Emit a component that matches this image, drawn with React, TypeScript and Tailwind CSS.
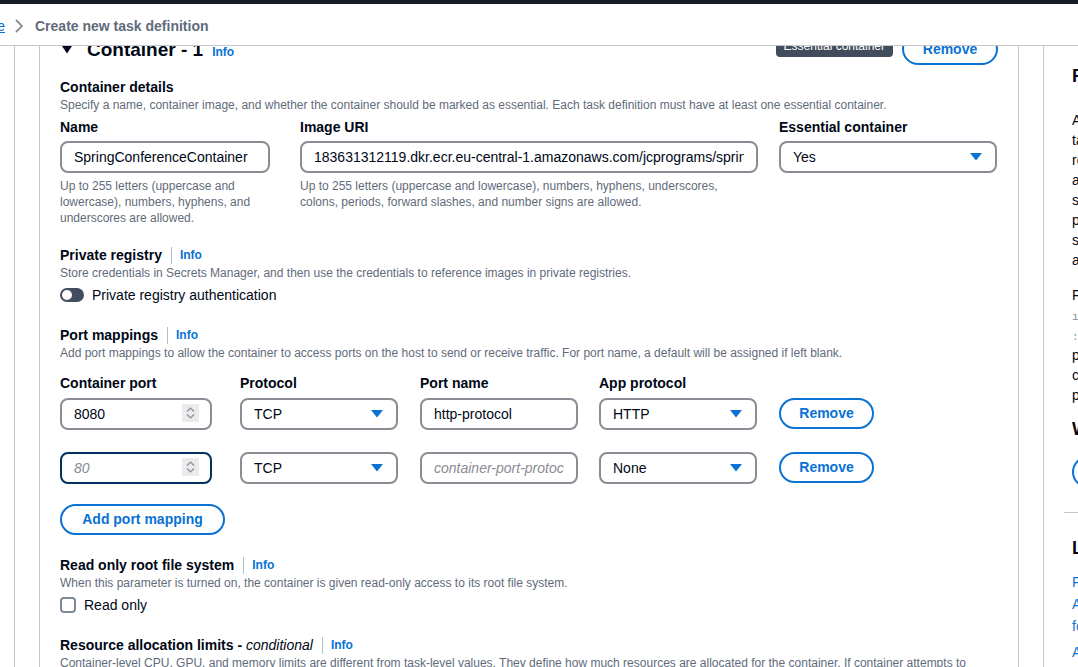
import { ReactNode } from "react";

const Info = () => <span className="text-[12px] font-bold text-[#0972d3]">Info</span>;

type TitleProps = { children: ReactNode; desc: string; className?: string; info?: boolean };

const SectionTitle = ({ children, desc, className = "", info = true }: TitleProps) => (
  <div className={className}>
    <div className="flex h-[18px] items-center">
      <span className="whitespace-nowrap text-[14px] font-bold leading-[18px]">{children}</span>
      {info && (
        <>
          <span className="ml-[9px] mr-[8px] h-[17px] w-px bg-[#b6bec9]" />
          <Info />
        </>
      )}
    </div>
    <p className="mt-[1px] text-[12px] leading-[16px] text-[#5f6b7a]">{desc}</p>
  </div>
);

const Label = ({ children }: { children: ReactNode }) => (
  <div className="text-[14px] font-bold leading-[18px]">{children}</div>
);

const Caret = () => (
  <svg width="12" height="8" viewBox="0 0 12 8" className="shrink-0">
    <polygon points="0,0 12,0 6,7.5" fill="#0972d3" />
  </svg>
);

const Select = ({ value, width }: { value: string; width: string }) => (
  <div
    className={`flex h-[32px] items-center justify-between rounded-[8px] border-2 border-[#8c8c94] pl-[12px] pr-[13px] text-[14px] ${width}`}
  >
    <span>{value}</span>
    <Caret />
  </div>
);

const NumberInput = ({ value, placeholder, focused }: { value?: string; placeholder?: string; focused?: boolean }) => (
  <div className="relative w-[152px]">
    <input
      readOnly
      value={value ?? ""}
      placeholder={placeholder}
      className={`h-[32px] w-full rounded-[8px] border-2 px-[12px] text-[14px] text-[#000716] outline-none placeholder:italic placeholder:text-[#8c8c94] ${
        focused ? "border-[#033160]" : "border-[#8c8c94]"
      }`}
    />
    <div className="absolute right-[13px] top-[6px] flex h-[18px] w-[17px] flex-col items-center justify-center gap-[2px] bg-[#e9ebed]">
      <svg width="9" height="5" viewBox="0 0 9 5">
        <path d="M1 4.5 L4.5 1 L8 4.5" fill="none" stroke="#8c8c94" strokeWidth="1.2" />
      </svg>
      <svg width="9" height="5" viewBox="0 0 9 5">
        <path d="M1 0.5 L4.5 4 L8 0.5" fill="none" stroke="#8c8c94" strokeWidth="1.2" />
      </svg>
    </div>
  </div>
);

const TextInput = ({ value, placeholder, width }: { value?: string; placeholder?: string; width: string }) => (
  <input
    readOnly
    value={value ?? ""}
    placeholder={placeholder}
    className={`h-[32px] rounded-[8px] border-2 border-[#8c8c94] px-[12px] text-[14px] text-[#000716] outline-none placeholder:italic placeholder:text-[#8c8c94] ${width}`}
  />
);

const OutlineButton = ({ children, width, height = "h-[31px]" }: { children: ReactNode; width: string; height?: string }) => (
  <button
    className={`flex items-center justify-center rounded-full border-2 border-[#0972d3] text-[14px] font-bold text-[#0972d3] ${width} ${height}`}
  >
    {children}
  </button>
);

const PortRow = ({ port, placeholderPort, name, placeholderName, app, focused, className = "" }: {
  port?: string;
  placeholderPort?: string;
  name?: string;
  placeholderName?: string;
  app: string;
  focused?: boolean;
  className?: string;
}) => (
  <div className={`flex gap-[20px] ${className}`}>
    <div className="w-[160px]">
      <NumberInput value={port} placeholder={placeholderPort} focused={focused} />
    </div>
    <div className="w-[160px]">
      <Select value="TCP" width="w-[158px]" />
    </div>
    <div className="w-[159px]">
      <TextInput value={name} placeholder={placeholderName} width="w-[158px]" />
    </div>
    <div className="w-[160px]">
      <Select value={app} width="w-[158px]" />
    </div>
    <OutlineButton width="w-[95px]">Remove</OutlineButton>
  </div>
);

const HelpPanel = () => (
  <aside className="w-[34px] overflow-hidden">
    <div className="w-[320px] whitespace-nowrap pl-[20px] text-[14px] leading-[20px]">
      <div className="pl-[8px]">
        <h3 className="mt-[19px] text-[18px] font-bold leading-[22px]">Fargate task definition</h3>
        <div className="mt-[23px]">
          <div className="h-[20px]">A task definition is required to run Docker</div>
          <div className="h-[20px]">tasks in Amazon ECS. It works as a</div>
          <div className="h-[20px]">recipe that tells ECS which containers to</div>
          <div className="h-[20px]">assemble, how much CPU and memory to</div>
          <div className="h-[20px]">set aside, and which launch type and</div>
          <div className="h-[20px]">ports the application needs. It also</div>
          <div className="h-[20px]">specifies the IAM role and logging</div>
          <div className="h-[20px]">and data volumes the tasks use.</div>
        </div>
        <div className="mt-[15px]">
          <div className="h-[20px]">For images in a private registry, use</div>
          <div className="h-[20px]">
            <code className="font-['Liberation_Mono',monospace] text-[11px] text-[#8c8c94]">ıepository-url</code> and
          </div>
          <div className="h-[20px]">
            <code className="font-['Liberation_Mono',monospace] text-[11px] text-[#8c8c94]">:image-tag</code> values.
          </div>
          <div className="h-[20px]">provide the credentials in Secrets</div>
          <div className="h-[20px]">credentials manager before you</div>
          <div className="h-[20px]">proceed with creating the task.</div>
        </div>
        <h3 className="mt-[13px] text-[18px] font-bold leading-[22px]">What's new</h3>
        <button className="mt-[16px] h-[32px] rounded-full border-2 border-[#0972d3] px-[20px] text-[14px] font-bold text-[#0972d3]">
          Learn about updates
        </button>
      </div>
      <div className="mt-[24px] h-px bg-[#c6c6cd]" />
      <div className="pl-[8px]">
        <h3 className="mt-[24px] text-[18px] font-bold leading-[22px]">Learn more</h3>
        <div className="mt-[12px] leading-[22px] text-[#0972d3]">
          <div>Fargate task definitions</div>
          <div>Amazon ECS task definition</div>
          <div>for Fargate launch type</div>
          <div className="mt-[4px]">Amazon ECS container</div>
          <div>settings</div>
        </div>
      </div>
    </div>
  </aside>
);

export default function App() {
  return (
    <div className="h-[667px] w-[1078px] overflow-hidden bg-white font-['Liberation_Sans',Arial,sans-serif] text-[#000716]">
      <div className="h-[4px] bg-[#161d26]" />

      {/* Breadcrumbs */}
      <div className="flex h-[42px] items-center border-b border-[#c6c6cd] pt-[3px]">
        <div className="flex w-[5px] justify-end overflow-hidden">
          <a className="whitespace-nowrap text-[14px] text-[#0972d3] underline">Amazon Elastic Container Service</a>
        </div>
        <svg width="8" height="14" viewBox="0 0 8 14" className="ml-[10px]">
          <path d="M1 1 L7 7 L1 13" fill="none" stroke="#8c8c94" strokeWidth="1.8" />
        </svg>
        <span className="ml-[12px] text-[14px] font-bold text-[#5f6b7a]">Create new task definition</span>
      </div>

      <div className="flex h-[621px]">
        <div className="w-[15px] border-r border-[#c6c6cd]" />
        <div className="w-[25px] border-r border-[#c6c6cd]" />

        {/* Container form */}
        <main className="flex w-[978px] flex-col overflow-hidden px-[20px]">
          <div className="mt-[-13px] flex h-[32px] shrink-0 items-start justify-between">
            <div className="flex items-start">
              <svg width="10" height="8" viewBox="0 0 10 8" className="ml-[2px] mt-[13px]">
                <polygon points="0,0 10,0 5,7.5" fill="#000716" />
              </svg>
              <div className="ml-[15px] mt-[5px] flex items-baseline">
                <h2 className="text-[19px] font-bold leading-[24px]">Container - 1</h2>
                <span className="ml-[9px]">
                  <Info />
                </span>
              </div>
            </div>
            <div className="flex items-start">
              <span className="mt-[3px] h-[21px] rounded-[4px] bg-[#414d5c] px-[8px] text-[12px] leading-[21px] text-white">
                Essential container
              </span>
              <OutlineButton width="w-[96px] ml-[9px]" height="h-[32px]">
                Remove
              </OutlineButton>
            </div>
          </div>

          <SectionTitle
            className="mt-[13px]"
            info={false}
            desc="Specify a name, container image, and whether the container should be marked as essential. Each task definition must have at least one essential container."
          >
            Container details
          </SectionTitle>

          <div className="mt-[5px] flex">
            <div className="w-[220px]">
              <Label>Name</Label>
              <TextInput value="SpringConferenceContainer" width="w-[210px] mt-[5px]" />
              <p className="mt-[5px] text-[12px] leading-[16px] text-[#5f6b7a]">
                Up to 255 letters (uppercase and
                <br />
                lowercase), numbers, hyphens, and
                <br />
                underscores are allowed.
              </p>
            </div>
            <div className="ml-[20px] w-[458px]">
              <Label>Image URI</Label>
              <TextInput
                value="183631312119.dkr.ecr.eu-central-1.amazonaws.com/jcprograms/springconference:latest"
                width="w-[458px] mt-[5px]"
              />
              <p className="mt-[5px] text-[12px] leading-[16px] text-[#5f6b7a]">
                Up to 255 letters (uppercase and lowercase), numbers, hyphens, underscores,
                <br />
                colons, periods, forward slashes, and number signs are allowed.
              </p>
            </div>
            <div className="ml-[21px] w-[218px]">
              <Label>Essential container</Label>
              <div className="mt-[5px]">
                <Select value="Yes" width="w-[218px]" />
              </div>
            </div>
          </div>

          <SectionTitle
            className="mt-[20px]"
            desc="Store credentials in Secrets Manager, and then use the credentials to reference images in private registries."
          >
            Private registry
          </SectionTitle>
          <div className="mt-[4px] flex h-[20px] items-center">
            <span className="flex h-[14px] w-[24px] items-center rounded-full bg-[#414d5c] px-[2px]">
              <span className="h-[10px] w-[10px] rounded-full bg-white" />
            </span>
            <span className="ml-[8px] text-[14px]">Private registry authentication</span>
          </div>

          <SectionTitle
            className="mt-[21px]"
            desc="Add port mappings to allow the container to access ports on the host to send or receive traffic. For port name, a default will be assigned if left blank."
          >
            Port mappings
          </SectionTitle>

          <div className="mt-[13px] flex gap-[20px]">
            <div className="w-[160px]">
              <Label>Container port</Label>
            </div>
            <div className="w-[160px]">
              <Label>Protocol</Label>
            </div>
            <div className="w-[159px]">
              <Label>Port name</Label>
            </div>
            <div className="w-[160px]">
              <Label>App protocol</Label>
            </div>
          </div>
          <PortRow className="mt-[6px]" port="8080" name="http-protocol" app="HTTP" />
          <PortRow
            className="mt-[22px]"
            placeholderPort="80"
            placeholderName="container-port-protocol"
            app="None"
            focused
          />
          <div className="mt-[20px]">
            <OutlineButton width="w-[165px]">Add port mapping</OutlineButton>
          </div>

          <SectionTitle
            className="mt-[21px]"
            desc="When this parameter is turned on, the container is given read-only access to its root file system."
          >
            Read only root file system
          </SectionTitle>
          <div className="mt-[4px] flex h-[20px] items-center">
            <span className="h-[16px] w-[16px] rounded-[4px] border-2 border-[#7d8998]" />
            <span className="ml-[8px] text-[14px]">Read only</span>
          </div>

          <SectionTitle
            className="mt-[21px]"
            desc="Container-level CPU, GPU, and memory limits are different from task-level values. They define how much resources are allocated for the container. If container attempts to exceed the memory specified in hard limit, the container is terminated."
          >
            Resource allocation limits - <i className="font-normal">conditional</i>
          </SectionTitle>
        </main>

        <div className="w-[26px] border-x border-[#c6c6cd]" />
        <HelpPanel />
      </div>
    </div>
  );
}
